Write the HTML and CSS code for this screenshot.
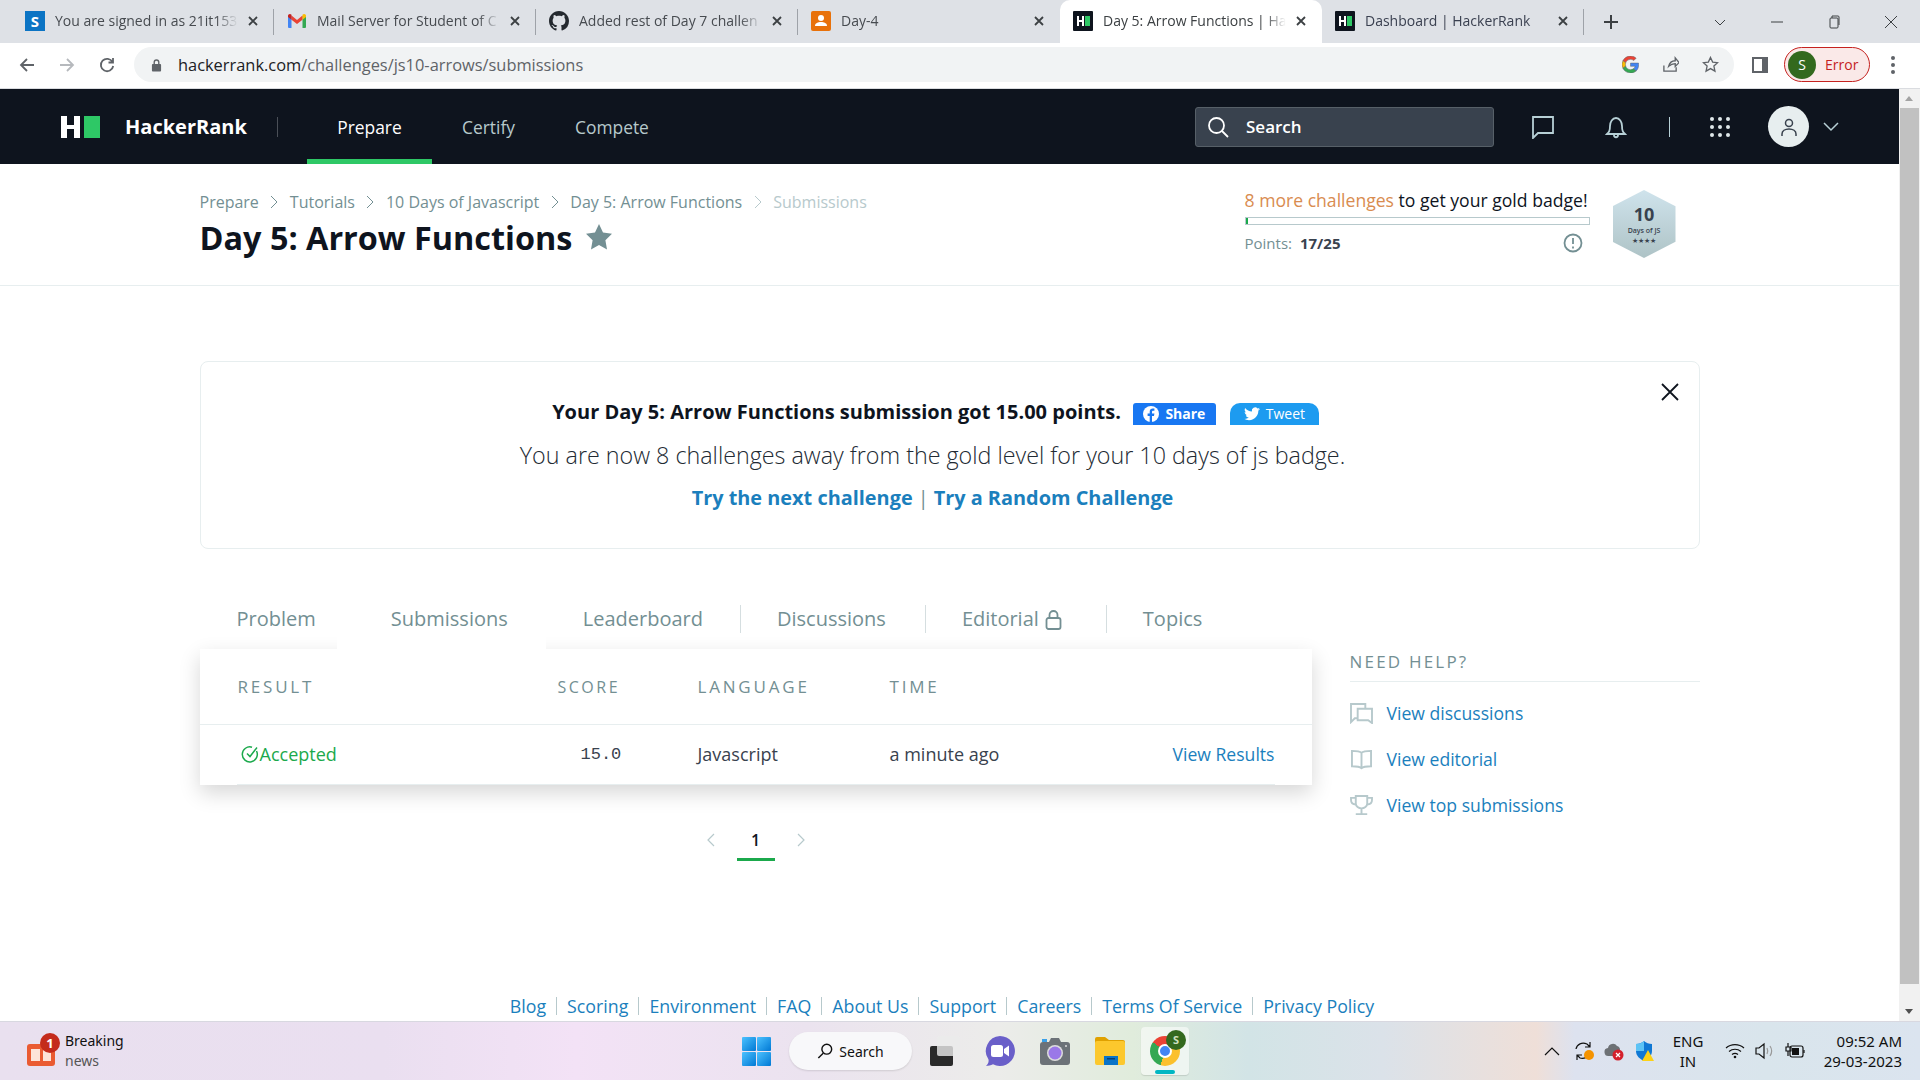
FILE: index.html
```html
<!DOCTYPE html>
<html>
<head>
    <meta charset="UTF-8">
    <title>Day 5: Arrow Functions | HackerRank</title>
    <link rel="stylesheet" href="styles.css">
</head>
<body>

<div class="tabstrip">
    <div class="tab">
        <span class="fav fav-s">S</span>
        <span class="tab-title">You are signed in as 21it153</span>
        <svg class="tab-x" viewBox="0 0 10 10"><path d="M1 1l8 8M9 1l-8 8"/></svg>
    </div>
    <div class="tab">
        <svg class="fav" viewBox="0 0 20 20"><path fill="#4285f4" d="M1 5h3.500v12H2a1 1 0 0 1-1-1z"/><path fill="#34a853" d="M15.500 5H19v11a1 1 0 0 1-1 1h-2.500z"/><path fill="#ea4335" d="M4.500 4.500L10 9l5.500-4.500v4.200L10 13 4.500 8.700z"/><path fill="#c5221f" d="M1 5c0-1.800 2-2.500 3.500-1.300V8.700L1 6z"/><path fill="#fbbc04" d="M19 5c0-1.800-2-2.500-3.500-1.300V8.700L19 6z"/></svg>
        <span class="tab-title">Mail Server for Student of C</span>
        <svg class="tab-x" viewBox="0 0 10 10"><path d="M1 1l8 8M9 1l-8 8"/></svg>
    </div>
    <div class="tab">
        <svg class="fav" viewBox="0 0 16 16"><path fill="#24292f" d="M8 0C3.580 0 0 3.580 0 8c0 3.540 2.290 6.530 5.470 7.590.4.070.55-.17.550-.38 0-.19-.01-.82-.01-1.490-2.010.37-2.530-.49-2.690-.94-.09-.23-.48-.94-.82-1.130-.28-.15-.68-.52-.01-.53.630-.01 1.080.58 1.230.82.720 1.210 1.870.87 2.330.66.070-.52.280-.87.510-1.070-1.780-.2-3.640-.89-3.640-3.950 0-.87.310-1.590.820-2.150-.08-.2-.36-1.020.08-2.120 0 0 .67-.21 2.200.82.640-.18 1.320-.27 2-.27s1.360.09 2 .27c1.530-1.040 2.200-.82 2.200-.82.440 1.100.16 1.920.08 2.120.51.560.82 1.270.82 2.150 0 3.070-1.870 3.750-3.650 3.950.290.250.540.730.540 1.480 0 1.070-.01 1.930-.01 2.200 0 .21.150.46.550.38A8.010 8.010 0 0 0 16 8c0-4.420-3.580-8-8-8z"/></svg>
        <span class="tab-title">Added rest of Day 7 challen</span>
        <svg class="tab-x" viewBox="0 0 10 10"><path d="M1 1l8 8M9 1l-8 8"/></svg>
    </div>
    <div class="tab no-sep">
        <svg class="fav" viewBox="0 0 20 20"><rect width="20" height="20" rx="2" fill="#e8710a"/><circle cx="10" cy="7" r="3" fill="#fff"/><path fill="#fff" d="M4 15c0-3 3-4 6-4s6 1 6 4z"/></svg>
        <span class="tab-title">Day-4</span>
        <svg class="tab-x" viewBox="0 0 10 10"><path d="M1 1l8 8M9 1l-8 8"/></svg>
    </div>
    <div class="tab active no-sep">
        <span class="fav fav-hr"><i></i><b></b></span>
        <span class="tab-title">Day 5: Arrow Functions | Ha</span>
        <svg class="tab-x" viewBox="0 0 10 10"><path d="M1 1l8 8M9 1l-8 8"/></svg>
    </div>
    <div class="tab">
        <span class="fav fav-hr"><i></i><b></b></span>
        <span class="tab-title dark">Dashboard | HackerRank</span>
        <svg class="tab-x" viewBox="0 0 10 10"><path d="M1 1l8 8M9 1l-8 8"/></svg>
    </div>
    <svg class="new-tab" viewBox="0 0 14 14"><path d="M7 0v14M0 7h14"/></svg>
    <div class="win-btns">
        <svg viewBox="0 0 14 14"><path d="M2 5l5 5 5-5"/></svg>
        <svg viewBox="0 0 14 14"><path d="M1 7h12"/></svg>
        <svg viewBox="0 0 14 14"><rect x="3" y="3" width="8" height="10" rx="1"/><path d="M5 3V1h6a1 1 0 0 1 1 1v8"/></svg>
        <svg viewBox="0 0 14 14"><path d="M1 1l12 12M13 1L1 13"/></svg>
    </div>
</div>

<div class="toolbar">
    <svg class="tool-ic" viewBox="0 0 16 16"><path d="M15 8H2M8 2L2 8l6 6"/></svg>
    <svg class="tool-ic off" viewBox="0 0 16 16"><path d="M1 8h13M8 2l6 6-6 6"/></svg>
    <svg class="tool-ic" viewBox="0 0 16 16"><path d="M13.500 5A6.200 6.200 0 1 0 14.200 9M14 1v4.500H9.500"/></svg>
    <div class="omnibox">
        <svg class="lock" viewBox="0 0 12 14"><path fill="#5f6368" d="M2 6h8a1 1 0 0 1 1 1v6a1 1 0 0 1-1 1H2a1 1 0 0 1-1-1V7a1 1 0 0 1 1-1z"/><path fill="none" stroke="#5f6368" stroke-width="1.500" d="M3.500 6V4a2.500 2.500 0 0 1 5 0v2"/></svg>
        <span class="url"><b>hackerrank.com</b>/challenges/js10-arrows/submissions</span>
        <svg class="omni-ic google" viewBox="0 0 48 48"><path fill="#ea4335" d="M24 9.500c3.500 0 6.700 1.300 9.100 3.500l6.800-6.800C35.800 2.400 30.300 0 24 0 14.600 0 6.500 5.400 2.600 13.200l7.900 6.200C12.400 13.700 17.700 9.500 24 9.500z"/><path fill="#4285f4" d="M47 24.500c0-1.600-.1-3.100-.4-4.500H24v9h13c-.6 3-2.200 5.500-4.800 7.200l7.700 6c4.500-4.200 7.100-10.300 7.100-17.700z"/><path fill="#fbbc05" d="M10.500 28.600A14.500 14.500 0 0 1 10.500 19.400l-7.900-6.200a24 24 0 0 0 0 21.600z"/><path fill="#34a853" d="M24 48c6.500 0 11.900-2.100 15.900-5.800l-7.700-6c-2.200 1.400-4.900 2.300-8.200 2.300-6.300 0-11.600-4.200-13.500-9.900l-7.900 6.200C6.500 42.600 14.600 48 24 48z"/></svg>
        <svg class="omni-ic line" viewBox="0 0 18 18"><path d="M2 10v6h13v-4M7 11c1-4 4-6 7-6V2l4 5-4 4V8c-3 0-5 1-7 3z"/></svg>
        <svg class="omni-ic line" viewBox="0 0 18 18"><path d="M9 1.500l2.300 5 5.200.6-3.900 3.600 1.100 5.300L9 13.300 4.300 16l1.100-5.300L1.500 7.100l5.200-.6z"/></svg>
    </div>
    <span class="side-panel"></span>
    <div class="error-pill"><span class="avatar-s">S</span>Error</div>
    <span class="kebab"><i></i><i></i><i></i></span>
</div>

<div class="window">
    <div class="page">
        <nav class="nav">
            <span class="logo"><i class="logo-h"><b></b><b></b><b></b></i><i class="logo-g"></i></span>
            <span class="brand">HackerRank</span>
            <span class="nav-sep"></span>
            <a class="nav-link on">Prepare</a>
            <a class="nav-link">Certify</a>
            <a class="nav-link">Compete</a>
            <div class="search">
                <svg viewBox="0 0 22 22"><circle cx="9.500" cy="9.500" r="7.500"/><path d="M15 15l6 6"/></svg>
                <span>Search</span>
            </div>
            <svg class="nav-ic chat" viewBox="0 0 24 24"><path d="M2 2h20v16H7l-5 5z"/></svg>
            <svg class="nav-ic bell" viewBox="0 0 24 24"><path d="M3 19c2-2 3-3 3-8 0-4 2.500-8 6-8s6 4 6 8c0 5 1 6 3 8zM10 20c0 3 4 3 4 0"/></svg>
            <span class="nav-sep2"></span>
            <span class="dots"><i></i><i></i><i></i><i></i><i></i><i></i><i></i><i></i><i></i></span>
            <span class="user">
                <svg viewBox="0 0 20 20"><circle cx="10" cy="6" r="3.500"/><path d="M3 19v-2c0-3 3-5 7-5s7 2 7 5v2"/></svg>
            </span>
            <svg class="user-arrow" viewBox="0 0 16 10"><path d="M1 1l7 7 7-7"/></svg>
        </nav>

        <header class="head">
            <div class="wrap head-row">
                <div class="head-left">
                    <div class="crumbs">
                        <a>Prepare</a><svg viewBox="0 0 8 14"><path d="M1 1l6 6-6 6"/></svg>
                        <a>Tutorials</a><svg viewBox="0 0 8 14"><path d="M1 1l6 6-6 6"/></svg>
                        <a>10 Days of Javascript</a><svg viewBox="0 0 8 14"><path d="M1 1l6 6-6 6"/></svg>
                        <a>Day 5: Arrow Functions</a><svg class="pale" viewBox="0 0 8 14"><path d="M1 1l6 6-6 6"/></svg>
                        <a class="pale-text">Submissions</a>
                    </div>
                    <h1>Day 5: Arrow Functions <svg class="star" viewBox="0 0 24 24"><path d="M12 0l3.700 7.900 8.300 1.100-6.100 5.900 1.500 8.700L12 19.400l-7.400 4.200 1.500-8.700L0 9l8.300-1.100z"/></svg></h1>
                </div>
                <div class="progress">
                    <div class="progress-txt"><span class="orange">8 more challenges</span> to get your gold badge!</div>
                    <div class="bar"><div class="bar-fill" style="width: 2px"></div></div>
                    <div class="points">
                        <span>Points:</span><b>17/25</b>
                        <svg viewBox="0 0 20 20"><circle cx="10" cy="10" r="8.500"/><path d="M10 5v6M10 13.500v2"/></svg>
                    </div>
                </div>
                <div class="badge"><b>10</b><span>Days of JS</span><em>★★★★</em></div>
            </div>
        </header>

        <div class="wrap">
            <section class="notice">
                <svg class="notice-x" viewBox="0 0 18 18"><path d="M1 1l16 16M17 1L1 17"/></svg>
                <div class="notice-top">
                    <strong>Your Day 5: Arrow Functions submission got 15.00 points.</strong>
                    <a class="share fb">
                        <svg viewBox="0 0 16 16"><circle cx="8" cy="8" r="8" fill="#fff"/><path fill="#1877f2" d="M9 16V10h2l.4-2.400H9V6c0-.8.3-1.300 1.400-1.300h1V2.600C11 2.500 10.400 2.500 9.800 2.500 8 2.500 6.700 3.600 6.700 5.700v1.900H4.600V10h2.100v6z"/></svg>Share</a>
                    <a class="share tw">
                        <svg viewBox="0 0 24 20"><path fill="#fff" d="M24 2.400c-.9.400-1.800.7-2.800.8 1-.6 1.800-1.600 2.200-2.700-1 .6-2 1-3.100 1.200A4.900 4.900 0 0 0 11.900 6.200C7.800 6 4.200 4 1.700.9c-1.300 2.200-.7 5.100 1.500 6.600-.8 0-1.600-.2-2.200-.6 0 2.300 1.600 4.400 3.900 4.900-.7.200-1.500.2-2.200.1.600 2 2.400 3.400 4.600 3.400A9.900 9.900 0 0 1 0 17.300 13.900 13.900 0 0 0 7.500 19.500c9.100 0 14.300-7.700 14-14.600 1-.7 1.800-1.500 2.500-2.500z"/></svg>Tweet</a>
                </div>
                <p class="notice-mid">You are now 8 challenges away from the gold level for your 10 days of js badge.</p>
                <p class="notice-links"><a>Try the next challenge</a><span>|</span><a>Try a Random Challenge</a></p>
            </section>

            <div class="columns">
                <div class="col-main">
                    <div class="tabs">
                        <a class="t">Problem</a>
                        <a class="t t-active">Submissions</a>
                        <a class="t">Leaderboard</a>
                        <a class="t t-sep">Discussions</a>
                        <a class="t t-sep t-lock">Editorial <svg viewBox="0 0 16 20"><rect x="1" y="8" width="14" height="11" rx="2"/><path d="M4 8V5a4 4 0 0 1 8 0v3"/></svg></a>
                        <a class="t t-sep">Topics</a>
                    </div>
                    <div class="table">
                        <div class="tr th">
                            <span class="c-result">RESULT</span>
                            <span class="c-score small">SCORE</span>
                            <span class="c-lang">LANGUAGE</span>
                            <span class="c-time">TIME</span>
                        </div>
                        <div class="tr td">
                            <span class="c-result accepted"><svg viewBox="0 0 18 18"><path d="M15.500 6A7.500 7.500 0 1 1 11 2.200M6 8.500l3 3 7-9"/></svg>Accepted</span>
                            <span class="c-score mono">15.0</span>
                            <span class="c-lang">Javascript</span>
                            <span class="c-time">a minute ago</span>
                            <a class="view">View Results</a>
                        </div>
                    </div>
                    <div class="pager">
                        <svg viewBox="0 0 8 14"><path d="M7 1L1 7l6 6"/></svg>
                        <span class="page-no">1</span>
                        <svg viewBox="0 0 8 14"><path d="M1 1l6 6-6 6"/></svg>
                    </div>
                </div>
                <aside class="help">
                    <h4>NEED HELP?</h4>
                    <a><svg viewBox="0 0 24 22"><path d="M16 6V1H1v19l4-4h2M8 6h15v15l-4-3H8z"/></svg>View discussions</a>
                    <a><svg viewBox="0 0 24 22"><path d="M12 4C10 2 6 2 2 2v16c4 0 8 0 10 2 2-2 6-2 10-2V2c-4 0-8 0-10 2zM12 4v17"/></svg>View editorial</a>
                    <a><svg viewBox="0 0 24 22"><path d="M6 1h12v8c0 3-3 5-6 5s-6-2-6-5zM6 3H1v2c0 3 2 5 5 5M18 3h5v2c0 3-2 5-5 5M12 14v5M6 20h12"/></svg>View top submissions</a>
                </aside>
            </div>
        </div>

        <footer class="foot">
            <a>Blog</a><a>Scoring</a><a>Environment</a><a>FAQ</a><a>About Us</a><a>Support</a><a>Careers</a><a>Terms Of Service</a><a>Privacy Policy</a>
        </footer>
    </div>

    <div class="scroll">
        <span class="arrow-up"></span>
        <div class="thumb"></div>
        <span class="arrow-down"></span>
    </div>
</div>

<div class="taskbar">
    <div class="news">
        <span class="news-ic"><i></i><em>1</em></span>
        <div class="news-txt"><span>Breaking</span><span class="sub">news</span></div>
    </div>
    <div class="task-mid">
        <span class="win-logo"><i></i><i></i><i></i><i></i></span>
        <div class="task-search">
            <svg viewBox="0 0 18 18"><circle cx="11" cy="7" r="5.500"/><path d="M7 11.500L1.500 17"/></svg>
            Search
        </div>
        <span class="taskview"><i></i><b></b></span>
        <svg class="app teams" viewBox="0 0 30 30"><path fill="#6a5fc9" d="M15 0a15 15 0 1 1-7 28.300C6 29.500 3 30 1 30c2-2 3-4 2.500-6.500A15 15 0 0 1 15 0z"/><rect x="6" y="9" width="12" height="12" rx="2.500" fill="#fff"/><path fill="#fff" d="M19 13l5-3.500v11L19 17z"/></svg>
        <svg class="app camera" viewBox="0 0 30 28"><rect y="5" width="30" height="23" rx="3" fill="#6c7278"/><path fill="#6c7278" d="M9 5l2-4h8l2 4z"/><rect x="2" y="2" width="5" height="3" fill="#3aa0e8"/><circle cx="15" cy="16" r="8" fill="#ddd"/><circle cx="15" cy="16" r="6.500" fill="#9a78e8"/><circle cx="26" cy="9" r="1" fill="#ddd"/></svg>
        <svg class="app folder" viewBox="0 0 30 28"><path fill="#e0a100" d="M0 2a2 2 0 0 1 2-2h8l4 3h14a2 2 0 0 1 2 2v6H0z"/><rect y="4" width="30" height="24" rx="2" fill="#fcc82d"/><rect x="9" y="19" width="14" height="9" fill="#0a74c8"/><rect x="12" y="21" width="8" height="1.500" fill="#063f77"/></svg>
        <div class="chrome-tile">
            <span class="chrome"><i></i></span>
            <em>S</em>
            <b></b>
        </div>
    </div>
    <div class="tray">
        <svg class="t-ic" viewBox="0 0 16 10"><path d="M1 9l7-7 7 7"/></svg>
        <svg class="t-ic sync" viewBox="0 0 20 20"><path d="M2 8C3 3 8 1 13 3l3 3M16 1v5h-5M16 12c-1 4-6 6-10 5l-3-3M3 19v-5h5"/><circle cx="15" cy="14" r="5" fill="#f59300" stroke="none"/></svg>
        <svg class="t-ic cloud" viewBox="0 0 20 20"><path fill="#6d7175" stroke="none" d="M5 15a4 4 0 0 1-1-8 5 5 0 0 1 9-2 4 4 0 0 1 3 4v6z"/><circle cx="14" cy="14" r="5.500" fill="#d4212c" stroke="none"/><path stroke="#fff" d="M12 12l4 4M16 12l-4 4"/></svg>
        <svg class="t-ic shield" viewBox="0 0 20 20"><path fill="#0f78d4" stroke="none" d="M10 0c2 2 5 3 8 3v7c0 5-4 8-8 10-4-2-8-5-8-10V3c3 0 6-1 8-3z"/><path fill="#5cc3f5" stroke="none" d="M10 0c-2 2-5 3-8 3v7h8z"/><path fill="#fcd116" stroke="none" d="M14 9l6 11H8z"/></svg>
        <div class="lang"><span>ENG</span><span>IN</span></div>
        <svg class="t-ic wifi" viewBox="0 0 20 16"><path d="M1 5c5-4.500 13-4.500 18 0M4 8.500c3.500-3 8.500-3 12 0M7 11.500c2-1.500 4-1.500 6 0"/><circle cx="10" cy="14" r="1.300" fill="#111" stroke="none"/></svg>
        <svg class="t-ic vol" viewBox="0 0 20 16"><path d="M1 5h3l5-4v14l-5-4H1z"/><path class="soft" d="M12 5c1 2 1 4 0 6M15 3c2 3 2 7 0 10"/></svg>
        <svg class="t-ic batt" viewBox="0 0 20 16"><rect x="5" y="3" width="13" height="11" rx="2"/><rect x="7" y="5" width="7" height="7" fill="#111" stroke="none"/><path d="M19 7v3M3 0v4M1 4h5v4H1zM3 8v5"/></svg>
        <div class="clock"><span>09:52 AM</span><span>29-03-2023</span></div>
    </div>
</div>

</body>
</html>
```

FILE: styles.css
```css
* { box-sizing: border-box; }
html, body { margin: 0; padding: 0; height: 100%; overflow: hidden; }
body {
    display: flex;
    flex-direction: column;
    font-family: "Open Sans", "Noto Sans", sans-serif;
    color: #0e141e;
    background: #fff;
}
svg { display: block; flex: none; }
a { cursor: pointer; }

/* browser tabs */
.tabstrip {
    height: 43px;
    flex: none;
    display: flex;
    align-items: center;
    padding-left: 12px;
    background: #dee1e6;
}
.tab {
    position: relative;
    width: 262px;
    height: 43px;
    flex: none;
    display: flex;
    align-items: center;
    padding: 0 13px 2px;
    gap: 10px;
}
.tab::after {
    content: "";
    position: absolute;
    right: 0;
    top: 9px;
    width: 1px;
    height: 26px;
    background: #9ea2a8;
}
.tab.no-sep::after { display: none; }
.tab.active { background: #fff; border-radius: 10px 10px 0 0; }
.fav { width: 20px; height: 20px; flex: none; }
.fav-s {
    background: #0b74c4;
    color: #fff;
    font: 700 15px/20px "Open Sans", sans-serif;
    text-align: center;
}
.fav-hr {
    background: #0e141e;
    border-radius: 1px;
    display: flex;
    align-items: center;
    justify-content: center;
    gap: 1px;
}
.fav-hr i { width: 7px; height: 10px; background: linear-gradient(#fff 0 0) center/100% 2px no-repeat, linear-gradient(90deg, #fff 2px, transparent 2px, transparent 5px, #fff 5px); }
.fav-hr b { width: 5px; height: 10px; background: #2ec866; }
.tab-title {
    flex: 1;
    min-width: 0;
    white-space: nowrap;
    overflow: hidden;
    font-size: 14px;
    color: #474b50;
    -webkit-mask-image: linear-gradient(90deg, #000 88%, transparent 100%);
    mask-image: linear-gradient(90deg, #000 88%, transparent 100%);
}
.tab-title.dark { color: #3a4050; }
.tab.active .tab-title { color: #3c4043; }
.tab-x { width: 10px; height: 10px; margin-right: 3px; fill: none; stroke: #3c4043; stroke-width: 1.8; }
.new-tab { width: 14px; height: 14px; margin-left: 20px; fill: none; stroke: #3c4043; stroke-width: 2; }
.win-btns { margin-left: auto; display: flex; gap: 43px; padding-right: 22px; }
.win-btns svg { width: 14px; height: 14px; fill: none; stroke: #3c4043; stroke-width: 1; }

/* address bar */
.toolbar {
    height: 46px;
    flex: none;
    display: flex;
    align-items: center;
    padding: 0 0 2px 19px;
    background: #fff;
    border-bottom: 1px solid #dadce0;
}
.tool-ic { width: 16px; height: 16px; margin-right: 24px; fill: none; stroke: #5f6368; stroke-width: 1.8; }
.tool-ic.off { stroke: #b6b9bd; }
.omnibox {
    width: 1600px;
    height: 35px;
    margin-left: -5px;
    display: flex;
    align-items: center;
    padding: 0 15px 0 17px;
    border-radius: 18px;
    background: #f1f3f4;
}
.lock { width: 11px; height: 14px; }
.url { margin-left: 16px; font-size: 16.4px; color: #5f6368; }
.url b { font-weight: 400; color: #202124; }
.omni-ic { width: 17px; height: 17px; margin-left: 23px; fill: none; stroke: #5f6368; stroke-width: 1.4; }
.omni-ic.google { margin-left: auto; }
.side-panel { width: 16px; height: 16px; margin-left: 18px; border: 2px solid #5f6368; border-right-width: 6px; }
.error-pill {
    width: 86px;
    height: 35px;
    margin-left: 16px;
    display: flex;
    align-items: center;
    gap: 9px;
    padding-left: 3px;
    border: 1px solid #c5221f;
    border-radius: 18px;
    background: #fae9e8;
    color: #c5221f;
    font-size: 14px;
}
.avatar-s {
    width: 28px;
    height: 28px;
    border-radius: 50%;
    background: #33691e;
    color: #fff;
    text-align: center;
    line-height: 28px;
}
.kebab { margin-left: 21px; display: flex; flex-direction: column; gap: 3px; }
.kebab i { width: 4px; height: 4px; border-radius: 50%; background: #5f6368; }

/* page */
.window { flex: 1; min-height: 0; display: flex; }
.page { flex: 1; min-width: 0; display: flex; flex-direction: column; }
.scroll { width: 21px; flex: none; display: flex; flex-direction: column; background: #f1f1f1; }
.thumb { flex: 1; margin: 0 1px 18px 1px; background: #c1c1c1; }
.arrow-up, .arrow-down { height: 19px; flex: none; position: relative; }
.arrow-up::after, .arrow-down::after {
    content: "";
    position: absolute;
    left: 6px;
    border-left: 4px solid transparent;
    border-right: 4px solid transparent;
}
.arrow-up::after { top: 7px; border-bottom: 5px solid #a3a3a3; }
.arrow-down::after { top: 7px; border-top: 5px solid #505050; }

.nav {
    height: 75px;
    flex: none;
    display: flex;
    align-items: center;
    padding-left: 61px;
    background: #0e141e;
    color: #fff;
}
.logo { display: flex; gap: 4px; height: 22px; }
.logo-h {
    width: 19px;
    position: relative;
    display: flex;
    justify-content: space-between;
}
.logo-h b { width: 6px; background: #fff; }
.logo-h b:nth-child(3) { position: absolute; left: 0; top: 9px; width: 19px; height: 4px; }
.logo-g { width: 16px; background: #2ec866; }
.brand { margin-left: 25px; font-size: 20px; font-weight: 700; width: 121px; white-space: nowrap; }
.nav-sep { width: 1px; height: 20px; margin-left: 31px; background: #4a4f57; }
.nav-link {
    height: 75px;
    display: flex;
    align-items: center;
    padding: 0 30px;
    font-size: 17.4px;
    color: #b7c9cc;
}
.nav-link.on {
    width: 125px;
    margin-left: 29px;
    padding: 0;
    justify-content: center;
    color: #fff;
    box-shadow: inset 0 -5px 0 #2ec866;
}
.search {
    width: 299px;
    height: 40px;
    margin-left: auto;
    display: flex;
    align-items: center;
    gap: 17px;
    padding-left: 11px;
    border: 1px solid #576068;
    border-radius: 3px;
    background: #39424e;
    font-size: 17px;
    font-weight: 600;
}
.search svg { width: 22px; height: 22px; fill: none; stroke: #fff; stroke-width: 1.8; }
.nav-ic { width: 24px; height: 24px; fill: none; stroke: #b7d0d6; stroke-width: 1.8; }
.chat { margin-left: 37px; }
.bell { margin-left: 49px; }
.nav-sep2 { width: 1px; height: 20px; margin-left: 41px; background: #b7d0d6; }
.dots {
    margin-left: 40px;
    display: grid;
    grid-template-columns: repeat(3, 4px);
    gap: 4px;
}
.dots i { width: 4px; height: 4px; border-radius: 50%; background: #dfe8ea; }
.user {
    width: 41px;
    height: 41px;
    margin-left: 38px;
    display: flex;
    align-items: center;
    justify-content: center;
    border-radius: 50%;
    background: #e7eeef;
}
.user svg { width: 20px; height: 20px; fill: none; stroke: #39424e; stroke-width: 1.5; }
.user-arrow { width: 16px; height: 10px; margin: 0 60px 0 14px; fill: none; stroke: #b7d0d6; stroke-width: 1.5; }

.wrap { width: 1500px; margin: 0 auto; }
.head { height: 122px; flex: none; border-bottom: 1px solid #e7eeef; }
.head-row { display: flex; padding-top: 21px; }
.head-left { flex: 1; padding-top: 7px; }
.crumbs { display: flex; align-items: center; height: 20px; font-size: 16px; color: #738f93; }
.crumbs svg { width: 8px; height: 14px; margin: 0 11.5px; fill: none; stroke: #738f93; stroke-width: 1; }
.crumbs svg.pale { stroke: #b7c9cc; }
.pale-text { color: #b7c9cc; }
h1 {
    margin: 3px 0 0;
    display: flex;
    align-items: center;
    gap: 14px;
    font-size: 32.4px;
    line-height: 44px;
    font-weight: 700;
}
.star { width: 26px; height: 26px; fill: #738f93; }
.progress { width: 345px; margin-right: 23px; padding-top: 3px; }
.progress-txt { font-size: 17.6px; line-height: 24px; white-space: nowrap; }
.orange { color: #d98c50; }
.bar { height: 8px; margin-top: 5px; border: 1px solid #b7c9cc; }
.bar-fill { height: 6px; background: #1ba94c; }
.points { display: flex; align-items: center; gap: 8px; height: 24px; margin-top: 6px; font-size: 15px; color: #738f93; }
.points b { color: #39424e; }
.points svg { width: 20px; height: 20px; margin-left: auto; margin-right: 7px; fill: none; stroke: #738f93; stroke-width: 1.8; }
.badge {
    width: 63px;
    height: 68px;
    margin-top: 5px;
    margin-right: 24px;
    display: flex;
    flex-direction: column;
    align-items: center;
    justify-content: center;
    clip-path: polygon(50% 0, 100% 24%, 100% 76%, 50% 100%, 0 76%, 0 24%);
    background: linear-gradient(#cfe3ec, #aec3c6);
    color: #39424e;
}
.badge b { font-size: 18px; line-height: 22px; }
.badge span { font-size: 7px; font-weight: 600; line-height: 11px; }
.badge em { font-size: 7px; font-style: normal; line-height: 9px; }

/* result box */
.notice {
    position: relative;
    height: 188px;
    margin-top: 75px;
    padding: 34px 34px 0 0;
    border: 1px solid #e7eeef;
    border-radius: 8px;
    text-align: center;
}
.notice-x { position: absolute; right: 20px; top: 21px; width: 18px; height: 18px; fill: none; stroke: #0e141e; stroke-width: 1.8; }
.notice-top { display: flex; align-items: center; justify-content: center; gap: 12px; height: 30px; padding-left: 6px; font-size: 20px; }
.notice-top strong { font-weight: 700; }
.share {
    height: 22px;
    display: flex;
    align-items: center;
    justify-content: center;
    gap: 6px;
    margin-top: 5px;
    color: #fff;
    font-size: 14px;
    font-weight: 700;
}
.share svg { width: 16px; height: 16px; }
.share.fb { width: 83px; background: #1877f2; border-radius: 3px 3px 0 0; }
.share.tw { width: 89px; margin-left: 2px; background: #1d9bf0; border-radius: 10px 10px 0 0; font-weight: 400; }
.notice-mid { margin: 13px 0 0; font-size: 23.3px; line-height: 32px; font-weight: 300; color: #222a33; }
.notice-links { margin: 11px 0 0; font-size: 19.9px; line-height: 32px; font-weight: 700; color: #1b7fbd; }
.notice-links span { margin: 0 5px; font-weight: 400; color: #738f93; }

/* submissions */
.columns { display: flex; gap: 38px; }
.col-main { width: 1112px; flex: none; }
.tabs { height: 100px; display: flex; align-items: flex-end; font-size: 20px; color: #738f93; }
.t {
    height: 44px;
    display: flex;
    align-items: flex-start;
    gap: 6px;
    line-height: 28px;
    padding: 0 37px;
    white-space: nowrap;
}
.t svg { width: 17px; height: 20px; margin-top: 5px; fill: none; stroke: #738f93; stroke-width: 1.8; }
.t-active {
    position: relative;
    z-index: 2;
    width: 209px;
    height: 50px;
    margin: 0 0 -6px -16px;
    padding: 0 0 0 54px;
    background: #fff;
}
.t-sep { position: relative; padding-right: 39px; }
.t-sep.t-lock { padding-right: 44px; }
.t-sep::before { content: ""; position: absolute; left: 0; top: 0; width: 1px; height: 28px; background: #d5dee0; }
.table {
    height: 136px;
    position: relative;
    background: #fff;
    box-shadow: 0 8px 20px rgba(0,0,0,.16);
}
.tr { display: flex; align-items: center; padding-left: 38px; }
.th {
    height: 76px;
    border-bottom: 1px solid #e7eeef;
    font-size: 17px;
    letter-spacing: 2.8px;
    color: #738f93;
}
.th .small { font-size: 16px; letter-spacing: 2.5px; }
.td { height: 60px; padding-bottom: 2px; font-size: 18px; color: #39424e; }
.c-result { width: 320px; }
.c-score { width: 140px; }
.c-lang { width: 192px; }
.c-time { width: 200px; }
.accepted { display: flex; align-items: center; gap: 1px; padding-left: 3px; color: #1ba94c; }
.accepted svg { width: 18px; height: 18px; fill: none; stroke: #1ba94c; stroke-width: 1.5; }
.mono { padding-left: 23px; font: 17px "Liberation Mono", monospace; }
.view { margin-left: auto; margin-right: 37px; font-size: 17.6px; color: #1b7fbd; }
.td::after { content: ""; position: absolute; left: 37px; right: 37px; bottom: 0; height: 1px; background: #e7eeef; }
.pager { display: flex; align-items: flex-start; justify-content: center; margin-top: 40px; gap: 22px; height: 36px; }
.pager svg { width: 8px; height: 14px; margin-top: 8px; fill: none; stroke: #b7c9cc; stroke-width: 1.2; }
.page-no { width: 38px; height: 36px; text-align: center; font-size: 16px; font-weight: 600; line-height: 30px; border-bottom: 3px solid #1ba94c; }

.help { flex: 1; padding-top: 102px; }
.help h4 {
    margin: 0 0 8px;
    padding-bottom: 8px;
    border-bottom: 1px solid #e7eeef;
    font-size: 17px;
    line-height: 22px;
    font-weight: 400;
    letter-spacing: 2.2px;
    color: #738f93;
}
.help a { height: 46px; display: flex; align-items: center; gap: 14px; font-size: 17.6px; color: #1b7fbd; }
.help svg { width: 23px; height: 21px; fill: none; stroke: #b7c9cc; stroke-width: 2; }

.foot {
    margin-top: auto;
    height: 30px;
    display: flex;
    justify-content: center;
    align-items: center;
    padding-right: 15px;
    font-size: 17.8px;
    color: #1b7fbd;
}
.foot a { padding: 0 10px; }
.foot a + a { border-left: 1px solid #b7c9cc; line-height: 18px; }

/* windows taskbar */
.taskbar {
    height: 59px;
    flex: none;
    display: flex;
    align-items: center;
    border-top: 1px solid #d8d8e0;
    background: linear-gradient(90deg, #e9e0ef 0, #eadff0 20%, #f3e2f6 30%, #ebe3ef 42%, #ececea 52%, #e0ecdc 59%, #d2e4e6 65%, #dbe2e9 72%, #efdfd8 80%, #dde2ef 82%, #d9e5ec 92%, #dbe4ef 100%);
    color: #111;
}
.news { width: 742px; flex: none; display: flex; align-items: center; padding-left: 27px; gap: 10px; }
.news-ic { position: relative; width: 28px; height: 22px; margin-top: 8px; background: #ea5b32; border-radius: 3px; }
.news-ic i { position: absolute; left: 4px; top: 5px; width: 20px; height: 12px; background: linear-gradient(90deg, #fde3d8 9px, transparent 9px, transparent 12px, #fde3d8 12px); }
.news-ic em {
    position: absolute;
    left: 13px;
    top: -11px;
    width: 20px;
    height: 20px;
    border-radius: 50%;
    background: #c42b1c;
    color: #fff;
    font: 700 13px/20px "Noto Sans", sans-serif;
    text-align: center;
}
.news-txt { display: flex; flex-direction: column; font: 14px/20px "Noto Sans", sans-serif; }
.news-txt .sub { color: #555; }
.task-mid { display: flex; align-items: center; }
.win-logo { width: 29px; height: 29px; display: grid; grid-template-columns: 14px 14px; gap: 1px; }
.win-logo i { background: linear-gradient(135deg, #4cc2ff, #0078d4); border-radius: 1px; }
.task-search {
    width: 123px;
    height: 38px;
    margin-left: 18px;
    display: flex;
    align-items: center;
    justify-content: center;
    gap: 6px;
    border-radius: 19px;
    background: #f8f8fa;
    box-shadow: 0 1px 2px rgba(0,0,0,.12);
    font: 14px "Noto Sans", sans-serif;
}
.task-search svg { width: 16px; height: 16px; fill: none; stroke: #111; stroke-width: 1.6; }
.taskview { position: relative; width: 30px; height: 30px; margin-left: 18px; }
.taskview i { position: absolute; left: 0; bottom: 0; width: 23px; height: 20px; background: #2a2a2a; border-radius: 2px; }
.taskview b { position: absolute; right: 0; top: 0; width: 23px; height: 20px; background: rgba(235,235,235,.8); border-radius: 2px; }
.app { width: 30px; height: 28px; }
.teams { height: 30px; margin-left: 25px; }
.camera { margin-left: 25px; }
.folder { margin-left: 25px; }
.chrome-tile {
    position: relative;
    width: 48px;
    height: 48px;
    margin-left: 16px;
    display: flex;
    align-items: center;
    justify-content: center;
    border-radius: 4px;
    background: rgba(255,255,255,.55);
    box-shadow: 0 1px 1px rgba(0,0,0,.12);
}
.chrome {
    width: 30px;
    height: 30px;
    display: flex;
    align-items: center;
    justify-content: center;
    border-radius: 50%;
    background: conic-gradient(#ea4335 0 20%, #fbc02d 20% 55%, #34a853 55% 85%, #ea4335 85%);
}
.chrome i { width: 14px; height: 14px; border-radius: 50%; background: #4285f4; border: 2px solid #fff; }
.chrome-tile em {
    position: absolute;
    right: 3px;
    top: 3px;
    width: 20px;
    height: 20px;
    border-radius: 50%;
    background: #33691e;
    color: #cfe0c0;
    font: 700 11px/20px "Noto Sans", sans-serif;
    text-align: center;
}
.chrome-tile b { position: absolute; left: 14px; bottom: 1px; width: 20px; height: 4px; border-radius: 2px; background: #00b7c3; }
.tray { margin-left: auto; display: flex; align-items: center; padding-right: 18px; }
.t-ic { width: 20px; height: 20px; fill: none; stroke: #111; stroke-width: 1.2; }
.t-ic:first-child { width: 16px; height: 10px; margin-right: 4px; }
.t-ic + .t-ic { margin-left: 10px; }
.soft { stroke: #999; }
.lang { width: 48px; margin: 0 13px 0 10px; display: flex; flex-direction: column; align-items: center; font: 15px/20px "Noto Sans", sans-serif; }
.clock { width: 97px; display: flex; flex-direction: column; align-items: flex-end; font: 15px/20px "Noto Sans", sans-serif; }
```
